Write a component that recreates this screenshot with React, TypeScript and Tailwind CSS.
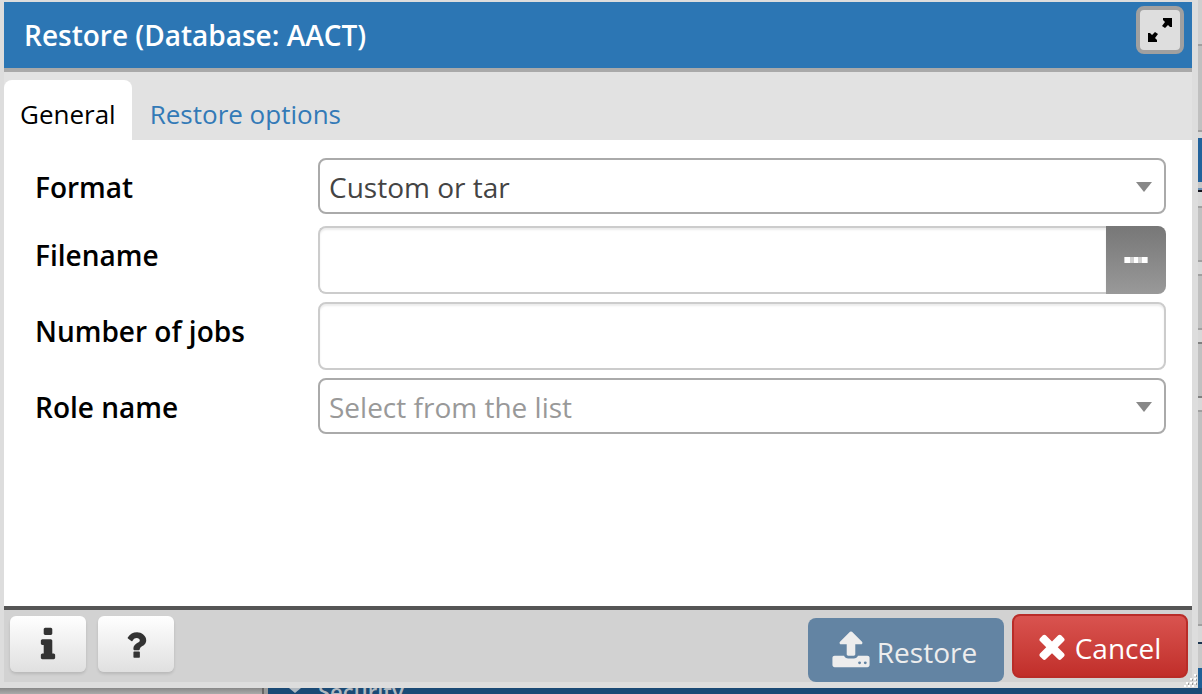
import type { ReactNode } from "react";

type IconProps = { path: string; className: string };

const icons = {
  times:
    "M1490 1322q0 40-28 68l-136 136q-28 28-68 28t-68-28l-294-294-294 294q-28 28-68 28t-68-28l-136-136q-28-28-28-68t28-68l294-294-294-294q-28-28-28-68t28-68l136-136q28-28 68-28t68 28l294 294 294-294q28-28 68-28t68 28l136 136q28 28 28 68t-28 68l-294 294 294 294q28 28 28 68z",
  upload:
    "M1344 1472q0-26-19-45t-45-19-45 19-19 45 19 45 45 19 45-19 19-45zm256 0q0-26-19-45t-45-19-45 19-19 45 19 45 45 19 45-19 19-45zm128-224v320q0 40-28 68t-68 28h-1472q-40 0-68-28t-28-68v-320q0-40 28-68t68-28h427q21 56 70.500 92t110.500 36h256q61 0 110.500-36t70.500-92h427q40 0 68 28t28 68zm-325-648q-17 40-59 40h-256v448q0 26-19 45t-45 19h-256q-26 0-45-19t-19-45v-448h-256q-42 0-59-40-17-39 14-69l448-448q18-19 45-19t45 19l448 448q31 30 14 69z",
  info: "M1216 1344v128q0 26-19 45t-45 19h-512q-26 0-45-19t-19-45v-128q0-26 19-45t45-19h64v-384h-64q-26 0-45-19t-19-45v-128q0-26 19-45t45-19h384q26 0 45 19t19 45v576h64q26 0 45 19t19 45zm-128-1152v192q0 26-19 45t-45 19h-256q-26 0-45-19t-19-45v-192q0-26 19-45t45-19h256q26 0 45 19t19 45z",
  question:
    "M1088 1256v240q0 16-12 28t-28 12h-240q-16 0-28-12t-12-28v-240q0-16 12-28t28-12h240q16 0 28 12t12 28zm316-600q0 54-15.500 101t-35 76.500-55 59.500-57.500 43.500-61 35.500q-41 23-68.500 65t-27.500 67q0 17-12 32.500t-28 15.500h-240q-15 0-25.500-18.500t-10.500-37.500v-45q0-83 65-156.500t143-108.500q59-27 84-56t25-76q0-42-46.500-74t-107.500-32q-65 0-108 29-35 25-107 115-13 16-31 16-12 0-25-8l-164-125q-13-10-15.500-25t5.500-28q160-266 464-266 80 0 161 31t146 83 106 127.500 41 158.500z",
};

function Icon({ path, className }: IconProps) {
  return (
    <svg viewBox="0 0 1792 1792" fill="currentColor" aria-hidden="true" className={className}>
      <path d={path} />
    </svg>
  );
}

function Row({ id, label, children }: { id: string; label: string; children: ReactNode }) {
  return (
    <div className="flex items-start">
      <label htmlFor={id} className="w-[283px] shrink-0 pt-[9px] text-[28px] leading-10 font-semibold text-black">
        {label}
      </label>
      <div className="flex min-w-0 flex-1">{children}</div>
    </div>
  );
}

function Select({ id, options, muted }: { id: string; options: string[]; muted?: boolean }) {
  return (
    <div className="relative flex-1">
      <select
        id={id}
        className={`h-14 w-full appearance-none rounded-lg border-2 border-[#aaa] bg-white px-[9px] pt-0.5 text-[28px] ${muted ? "text-[#999]" : "text-[#444]"}`}
      >
        {options.map((o) => (
          <option key={o}>{o}</option>
        ))}
      </select>
      <svg viewBox="0 0 16 10" className="pointer-events-none absolute top-6 right-3.5 h-2.5 w-4" aria-hidden="true">
        <path d="M0 0H16L8 10Z" fill="#888" />
      </svg>
    </div>
  );
}

const field =
  "h-[68px] min-w-0 flex-1 border-2 border-[#ccc] bg-white px-3 text-[28px] text-[#555] shadow-[inset_0_2px_2px_rgba(0,0,0,0.075)]";
const toolButton =
  "flex h-14 w-[76px] items-center justify-center rounded-md bg-linear-to-b from-white to-[#e0e0e0] pt-0.5 text-[#333] shadow-[0_2px_3px_rgba(0,0,0,0.12)]";

function BackdropEdge() {
  return (
    <div className="flex w-1 flex-col bg-[#c0c0c0]" aria-hidden="true">
      <div className="h-[46px] border-b-2 border-[#a0a0a0] bg-[#cfcfcf]" />
      <div className="h-[86px] border-b-2 border-[#a0a0a0]" />
      <div className="h-1.5 bg-[#d8d8d8]" />
      <div className="h-11 bg-[#22629c]" />
      <div className="h-2 border-b-2 border-[#6890b5] bg-[#c8c8c8]" />
      <div className="h-0.5 bg-[#15151f]" />
      <div className="h-4 border-b-2 border-[#a0a0a0] bg-[#d8d8d8]" />
      <div className="h-[54px] border-b-2 border-[#a0a0a0]" />
      <div className="h-3.5 border-b-2 border-[#a0a0a0] bg-[#d8d8d8]" />
      <div className="h-[54px] border-b-2 border-[#a0a0a0]" />
      <div className="h-3.5 border-b-2 border-[#808080] bg-[#d8d8d8]" />
      <div className="h-[54px] border-b-2 border-[#808080]" />
      <div className="h-3.5 border-b-2 border-[#a0a0a0] bg-[#d8d8d8]" />
      <div className="h-[214px] border-b-2 border-[#a0a0a0]" />
      <div className="h-4 bg-[#d8d8d8]" />
      <div className="h-0.5 bg-[#1b3550]" />
      <div className="h-6 bg-[#c8c8c8]" />
      <div className="flex-1 bg-[#1f5f97]" />
    </div>
  );
}

export default function App() {
  return (
    <div className="flex min-h-screen flex-col bg-[#a0a0a0] font-['Open_Sans',sans-serif]">
      <div className="flex flex-1">
        <main className="relative flex flex-1 flex-col border-t-2 border-r-[6px] border-b-[6px] border-l-4 border-[#dddddd] bg-white">
          <header className="flex h-[70px] items-start justify-between border-b-4 border-[#a9a9a9] bg-[#2c76b4] pr-2 pl-5">
            <h1 className="pt-[13px] text-[28px] leading-10 font-semibold text-white">Restore (Database: AACT)</h1>
            <button
              type="button"
              aria-label="Maximize"
              className="mt-1 flex size-12 items-center justify-center rounded-lg border-4 border-[#a0a0a0] bg-[#dedede]"
            >
              <svg viewBox="0 0 26 26" className="size-[26px]" aria-hidden="true">
                <path
                  d="M16 1H25V10H23L21 8L18 11L15 9L18 5L16 3ZM1 16H3L5 18L8 15L11 17L8 21L10 23V25H1Z"
                  fill="#000"
                />
              </svg>
            </button>
          </header>

          <nav className="flex h-[68px] items-end gap-0.5 bg-[#e2e2e2] text-[26px]">
            <button type="button" className="h-[60px] rounded-t-lg bg-white px-4 pt-2 text-black">
              General
            </button>
            <button type="button" className="h-[60px] px-4 pt-2 text-[#337ab7]">
              Restore options
            </button>
          </nav>

          <form id="restore-form" className="flex flex-1 flex-col gap-2 py-[18px] pr-[26px] pl-[31px]">
            <div className="pb-1">
              <Row id="format" label="Format">
                <Select id="format" options={["Custom or tar", "Directory"]} />
              </Row>
            </div>
            <Row id="filename" label="Filename">
              <input id="filename" type="text" className={`${field} rounded-l-lg border-r-0`} />
              <button
                type="button"
                aria-label="Browse"
                className="flex h-[68px] w-[60px] items-center justify-center rounded-r-lg bg-linear-to-b from-[#777] to-[#999]"
              >
                <svg viewBox="0 0 24 6" className="h-1.5 w-6" aria-hidden="true">
                  <path d="M0 0H24V6H0Z" fill="#d2d2d2" />
                  <path d="M1 0H6V6H1ZM10 0H14V6H10ZM18 0H23V6H18Z" fill="#fff" />
                </svg>
              </button>
            </Row>
            <Row id="jobs" label="Number of jobs">
              <input id="jobs" type="text" className={`${field} rounded-lg`} />
            </Row>
            <Row id="role" label="Role name">
              <Select id="role" options={["Select from the list"]} muted />
            </Row>
          </form>

          <footer className="flex h-[76px] items-start justify-between border-t-4 border-[#555] bg-[#d2d2d2] pr-1 pl-1.5">
            <div className="flex gap-3 pt-1.5">
              <button type="button" aria-label="Information" className={toolButton}>
                <Icon path={icons.info} className="size-10" />
              </button>
              <button type="button" aria-label="Help" className={toolButton}>
                <Icon path={icons.question} className="size-9" />
              </button>
            </div>
            <div className="flex gap-2 pt-1 text-[28px]">
              <button
                type="button"
                disabled
                className="mt-1 flex h-16 w-[196px] items-center justify-center gap-1.5 rounded-lg bg-[#6384a3] pt-1 pr-1 text-[#ededed]"
              >
                <Icon path={icons.upload} className="mb-1 size-10" />
                Restore
              </button>
              <button
                type="button"
                className="flex h-16 w-44 items-center justify-center gap-1 rounded-lg border-2 border-[#b92c28] bg-linear-to-b from-[#d9534f] to-[#c12e2a] pt-1 pr-1.5 text-white"
              >
                <Icon path={icons.times} className="mb-1 size-[38px]" />
                Cancel
              </button>
            </div>
          </footer>
          <svg viewBox="0 0 16 16" className="absolute -right-1.5 -bottom-1.5 size-4" aria-hidden="true">
            <path d="M12 2h2v2h-2zM8 6h2v2H8zM12 6h2v2h-2zM4 10h2v2H4zM8 10h2v2H8zM12 10h2v2h-2zM2 13h2v2H2zM6 13h2v2H6zM10 13h2v2h-2z" fill="#fff" />
            <path d="M14 3h1v2h-1zM10 7h1v2h-1zM14 7h1v2h-1zM6 11h1v2H6zM10 11h1v2h-1zM14 11h1v2h-1z" fill="#999" />
          </svg>
        </main>
        <BackdropEdge />
      </div>
      <div className="flex h-1.5 overflow-hidden">
        <div className="w-[262px] bg-linear-to-b from-[#888] to-[#aaa]" />
        <div className="w-1.5 border-l-2 border-[#666] bg-[#999]" />
        <div className="flex flex-1 items-center gap-4 bg-[#1b4a75] pl-5 text-[22px] leading-6 font-semibold text-[#b0b8c0]">
          <svg viewBox="0 0 14 6" className="h-1.5 w-3.5" aria-hidden="true">
            <path d="M1 0H13L7 5Z" fill="currentColor" />
          </svg>
          Security
        </div>
      </div>
    </div>
  );
}
